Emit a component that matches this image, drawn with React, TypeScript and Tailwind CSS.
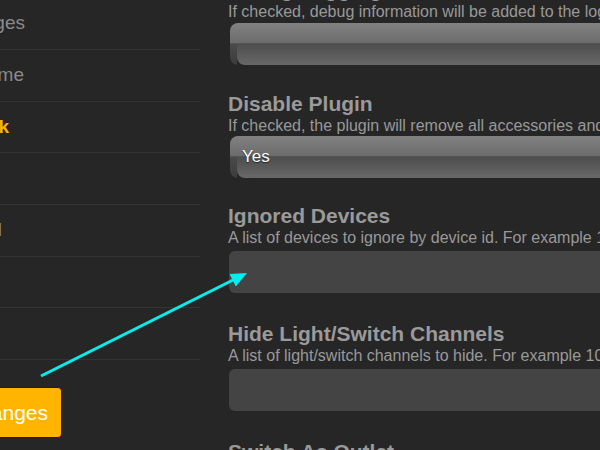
const navItems = [
  { label: "Messages", end: 25, h: "h-[52px]" },
  { label: "Home", end: 24, h: "h-[52px]" },
  { label: "Network", end: 9, h: "h-[51px]", active: true },
  { label: "Log", end: -12, h: "h-[52px]" },
  { label: "Terminal", end: 2, h: "h-[52px]" },
  { label: "Users", end: -20, h: "h-[51px]" },
  { label: "Backup", end: -16, h: "h-[52px]" },
];

const SelectBox = ({ value }: { value?: string }) => (
  <div className="grid w-[500px] h-[42px] ml-[2px] rounded-[8px] overflow-hidden">
    <div className="[grid-area:1/1] flex flex-col">
      <div className="h-[21px] bg-gradient-to-b from-[#828282] to-[#6b6b6b] border-b border-[#555]" />
      <div className="flex flex-1">
        <div className="w-[7px] bg-gradient-to-b from-[#4a4a4a] to-[#3c3c3c]" />
        <div className="flex-1 rounded-bl-[8px] bg-gradient-to-b from-[#4d4d4d] to-[#686868]" />
      </div>
    </div>
    <div className="[grid-area:1/1] flex items-center pl-[12px] text-[17px] text-white [text-shadow:0_1px_1px_#222]">
      {value}
    </div>
  </div>
);

const Section = ({
  title,
  desc,
  children,
  className,
}: {
  title: string;
  desc: string;
  children: React.ReactNode;
  className: string;
}) => (
  <div className={`flex flex-col ${className}`}>
    <h3 className="h-[24px] leading-[24px] text-[21px] font-bold text-[#9a9a9a] whitespace-nowrap">{title}</h3>
    <p className="h-[20px] leading-[20px] text-[16px] text-[#999] whitespace-nowrap">{desc}</p>
    {children}
  </div>
);

export default function App() {
  return (
    <div className="relative w-[600px] h-[450px] overflow-hidden bg-[#262626] flex font-['Liberation_Sans',Arial,sans-serif]">
      {/* sidebar */}
      <aside className="w-[200px] shrink-0 flex flex-col -mt-[2px]">
        {navItems.map((item) => (
          <div key={item.label} className={`${item.h} flex items-center border-b border-[#333]`}>
            <div
              className={`-ml-[150px] whitespace-nowrap text-right text-[19px] ${
                item.active ? "font-bold text-[#ffb400]" : "text-[#8a8a8a]"
              }`}
              style={{ width: 150 + item.end }}
            >
              {item.label}
            </div>
          </div>
        ))}
        <div className="mt-[27px] -ml-[150px] w-[212px] flex justify-end">
          <button className="h-[51px] px-[13px] rounded-[4px] border border-[#1d1d2a] bg-[#ffb400] text-white text-[21px] whitespace-nowrap">
            Save Changes
          </button>
        </div>
      </aside>

      {/* settings form */}
      <main className="ml-[28px] w-[520px] shrink-0 flex flex-col -mt-[22px]">
        <Section
          title="Debug Logging"
          desc="If checked, debug information will be added to the log."
          className="mb-[27px]"
        >
          <div className="mt-[1px]">
            <SelectBox />
          </div>
        </Section>
        <Section
          title="Disable Plugin"
          desc="If checked, the plugin will remove all accessories and not communicate."
          className="mb-[26px]"
        >
          <SelectBox value="Yes" />
        </Section>
        <Section
          title="Ignored Devices"
          desc="A list of devices to ignore by device id. For example 12345."
          className="mb-[29px]"
        >
          <input className="mt-[3px] ml-[1px] w-[500px] h-[42px] rounded-[6px] bg-[#444] outline-none" />
        </Section>
        <Section
          title="Hide Light/Switch Channels"
          desc="A list of light/switch channels to hide. For example 1001."
          className="mb-[29px]"
        >
          <input className="mt-[3px] ml-[1px] w-[500px] h-[42px] rounded-[6px] bg-[#444] outline-none" />
        </Section>
        <Section title="Switch As Outlet" desc="A list of switches to expose as outlets." className="">
          <div />
        </Section>
      </main>

      {/* annotation arrow */}
      <svg className="absolute inset-0 pointer-events-none" width="600" height="450">
        <line x1="41" y1="376" x2="233" y2="280" stroke="#00f0f0" strokeWidth="3" />
        <polygon points="247,273 229.6,273.9 235.8,286.5" fill="#00f0f0" />
      </svg>
    </div>
  );
}
